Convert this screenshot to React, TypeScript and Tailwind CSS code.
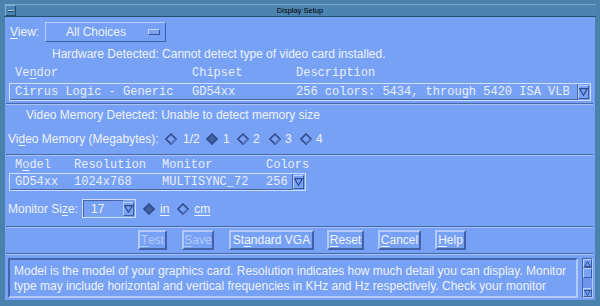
const SANS = "font-['Liberation_Sans',Arial,sans-serif]";
const MONO = "font-['Liberation_Mono','Courier_New',monospace]";

// Motif-style bevels
const RAISED =
  "border border-t-[#b8cefb] border-l-[#b8cefb] border-b-[#3d5da3] border-r-[#3d5da3]";
const SUNKEN =
  "border-2 border-t-[#4564a9] border-l-[#4564a9] border-b-[#b3cafa] border-r-[#b3cafa]";

function Divider() {
  return (
    <div className="ml-[1px] w-[587px] h-[2px] border-t border-t-[#4868ae] border-b border-b-[#a9c3f9]" />
  );
}

function Diamond({ on = false }: { on?: boolean }) {
  return (
    <svg width="12" height="12" viewBox="0 0 12 12" className="shrink-0">
      <polygon
        points="6,1 11,6 6,11 1,6"
        fill={on ? "#41609f" : "none"}
        stroke="#2f4c8c"
        strokeWidth="1.6"
      />
      {!on && <polyline points="6,11 11,6" stroke="#5777bb" strokeWidth="1.2" fill="none" />}
    </svg>
  );
}

function DownArrow({ className = "" }: { className?: string }) {
  return (
    <div
      className={`flex items-center justify-center w-[11px] h-[14px] ${RAISED} bg-[#78a2f5] ${className}`}
    >
      <svg width="9" height="8" viewBox="0 0 9 8">
        <polygon points="0.7,0.7 8.3,0.7 4.5,7.3" fill="none" stroke="#2d4a8a" strokeWidth="1.2" />
      </svg>
    </div>
  );
}

function Mn({ children }: { children: React.ReactNode }) {
  return <span className="underline underline-offset-2 decoration-1">{children}</span>;
}

function Btn({
  w,
  ml,
  disabled = false,
  children,
}: {
  w: string;
  ml: string;
  disabled?: boolean;
  children: React.ReactNode;
}) {
  return (
    <div
      className={`${w} ${ml} h-[20px] flex items-center justify-center border-2 border-t-[#b3cafa] border-l-[#b3cafa] border-b-[#4362a8] border-r-[#4362a8] text-[12px] ${
        disabled ? "text-[#b4cbf9]" : "text-[#f0f4fd]"
      }`}
    >
      {children}
    </div>
  );
}

export default function App() {
  return (
    <div className={`w-[600px] h-[306px] bg-[#4b82ad] px-[4px] pt-[4px] ${SANS}`}>
      {/* Title bar */}
      <div className="h-[13px] flex items-center bg-[#4b84b1] border-t border-t-[#7aa9cc] border-b border-b-[#24506f] relative">
        <div className="ml-[1px] w-[11px] h-[11px] flex items-center justify-center border border-t-[#86b2d3] border-l-[#86b2d3] border-b-[#24506f] border-r-[#24506f]">
          <div className="w-[6px] h-[2px] bg-[#a6c8e2] border-b border-b-[#24506f]" />
        </div>
        <div className="flex-1 text-center text-[7.5px] leading-none text-black pr-[12px]">
          Display Setup
        </div>
      </div>

      {/* Content */}
      <div className="mx-[1px] h-[283px] bg-[#77a1f5] flex flex-col text-[#eef3fd] text-[12px] leading-none">
        {/* View row */}
        <div className="mt-[5px] h-[20px] flex items-center pl-[5px]">
          <div className="w-[35px]">
            <Mn>V</Mn>iew:
          </div>
          <div className={`w-[121px] h-[20px] flex items-center ${RAISED}`}>
            <div className="pl-[20px] w-[102px]">All Choices</div>
            <div className="w-[12px] h-[6px] bg-[#7aa3f5] border border-t-[#c2d5fb] border-l-[#c2d5fb] border-b-[#35559b] border-r-[#35559b]" />
          </div>
        </div>

        <div className="h-[24px] flex items-center pl-[47px]">
          Hardware Detected: Cannot detect type of video card installed.
        </div>

        {/* Vendor header */}
        <div className={`h-[13px] flex items-center pl-[10px] ${MONO} text-[#e8eefc]`}>
          <div className="w-[177px]">
            Ve<Mn>n</Mn>dor
          </div>
          <div className="w-[104px]">Chipset</div>
          <div>Description</div>
        </div>

        {/* Vendor combo */}
        <div className="mt-[4px] ml-[4px] w-[582px] h-[18px] border border-[#cfdefc] flex items-center">
          <div
            className={`flex-1 h-full flex items-center pl-[5px] border-b border-b-[#4564a9] border-r border-r-[#4564a9] ${MONO} text-[#e8eefc] whitespace-nowrap`}
          >
            <div className="w-[177px]">Cirrus Logic - Generic</div>
            <div className="w-[104px]">GD54xx</div>
            <div>256 colors: 5434, through 5420 ISA VLB</div>
          </div>
          <DownArrow className="mr-[1px]" />
        </div>

        <div className="mt-[2px]">
          <Divider />
        </div>

        <div className="h-[20px] flex items-center pl-[21px]">
          Video Memory Detected: Unable to detect memory size
        </div>

        {/* Video memory radios */}
        <div className="h-[28px] flex items-center pl-[3px]">
          <div className="w-[157px]">
            Vi<Mn>d</Mn>eo Memory (Megabytes):
          </div>
          <div className="w-[41px] flex items-center gap-[6px]">
            <Diamond />
            <span>1/2</span>
          </div>
          <div className="w-[31px] flex items-center gap-[5px]">
            <Diamond on />
            <span>1</span>
          </div>
          <div className="w-[32px] flex items-center gap-[4px]">
            <Diamond />
            <span>2</span>
          </div>
          <div className="w-[31px] flex items-center gap-[4px]">
            <Diamond />
            <span>3</span>
          </div>
          <div className="flex items-center gap-[4px]">
            <Diamond />
            <span>4</span>
          </div>
        </div>

        <div className="mt-[1px]">
          <Divider />
        </div>

        {/* Model header */}
        <div className={`h-[17px] flex items-center pl-[10px] ${MONO} text-[#e8eefc]`}>
          <div className="w-[59px]">
            M<Mn>o</Mn>del
          </div>
          <div className="w-[88px]">Resolution</div>
          <div className="w-[104px]">Monitor</div>
          <div>Colors</div>
        </div>

        {/* Model combo */}
        <div className="ml-[4px] w-[297px] h-[18px] border border-[#cfdefc] flex items-center">
          <div
            className={`flex-1 h-full flex items-center pl-[5px] border-b border-b-[#4564a9] border-r border-r-[#4564a9] ${MONO} text-[#e8eefc] whitespace-nowrap`}
          >
            <div className="w-[59px]">GD54xx</div>
            <div className="w-[88px]">1024x768</div>
            <div className="w-[104px]">MULTISYNC_72</div>
            <div>256</div>
          </div>
          <DownArrow className="mr-[1px]" />
        </div>

        {/* Monitor size */}
        <div className="h-[35px] flex items-center pl-[3px]">
          <div className="w-[74px]">
            Monitor Si<Mn>z</Mn>e:
          </div>
          <div className="w-[54px] h-[19px] border border-[#cfdefc] flex items-center">
            <div className="flex-1 h-full flex items-center pl-[7px] border-t border-t-[#4564a9] border-l border-l-[#4564a9]">
              17
            </div>
            <DownArrow className="mr-[1px]" />
          </div>
          <div className="ml-[7px] flex items-center gap-[5px]">
            <Diamond on />
            <Mn>in</Mn>
          </div>
          <div className="ml-[8px] flex items-center gap-[5px]">
            <Diamond />
            <Mn>cm</Mn>
          </div>
        </div>

        <Divider />

        {/* Buttons */}
        <div className="mt-[2px] h-[20px] flex items-center pl-[133px]">
          <Btn w="w-[29px]" ml="ml-0" disabled>
            <Mn>T</Mn>est
          </Btn>
          <Btn w="w-[32px]" ml="ml-[15px]" disabled>
            <Mn>S</Mn>ave
          </Btn>
          <Btn w="w-[85px]" ml="ml-[15px]">
            St<Mn>a</Mn>ndard VGA
          </Btn>
          <Btn w="w-[37px]" ml="ml-[13px]">
            <Mn>R</Mn>eset
          </Btn>
          <Btn w="w-[43px]" ml="ml-[14px]">
            <Mn>C</Mn>ancel
          </Btn>
          <Btn w="w-[31px]" ml="ml-[14px]">
            <Mn>H</Mn>elp
          </Btn>
        </div>

        <div className="mt-[3px]">
          <Divider />
        </div>

        {/* Help text */}
        <div className="mt-[3px] h-[40px] flex pl-[3px]">
          <div
            className={`w-[570px] h-[40px] ${SUNKEN} pl-[4px] pt-[4px] leading-[15px] overflow-hidden whitespace-nowrap text-[#eef3fd]`}
          >
            <div>
              Model is the model of your graphics card. Resolution indicates how much detail you can
              display. Monitor
            </div>
            <div>
              type may include horizontal and vertical frequencies in KHz and Hz respectively. Check
              your monitor
            </div>
          </div>
          <div className="ml-[4px] w-[11px] h-[40px] flex flex-col bg-[#6d96ea] border border-t-[#4564a9] border-l-[#4564a9] border-b-[#b3cafa] border-r-[#b3cafa]">
            <div className={`h-[9px] flex items-center justify-center ${RAISED} bg-[#78a2f5]`}>
              <svg width="7" height="6" viewBox="0 0 7 6">
                <polygon points="3.5,0.6 6.4,5.4 0.6,5.4" fill="none" stroke="#2d4a8a" strokeWidth="1" />
              </svg>
            </div>
            <div className={`h-[10px] ${RAISED} bg-[#78a2f5]`} />
            <div className="flex-1" />
            <div className={`h-[9px] flex items-center justify-center ${RAISED} bg-[#78a2f5]`}>
              <svg width="7" height="6" viewBox="0 0 7 6">
                <polygon points="0.6,0.6 6.4,0.6 3.5,5.4" fill="none" stroke="#2d4a8a" strokeWidth="1" />
              </svg>
            </div>
          </div>
        </div>
      </div>
    </div>
  );
}
